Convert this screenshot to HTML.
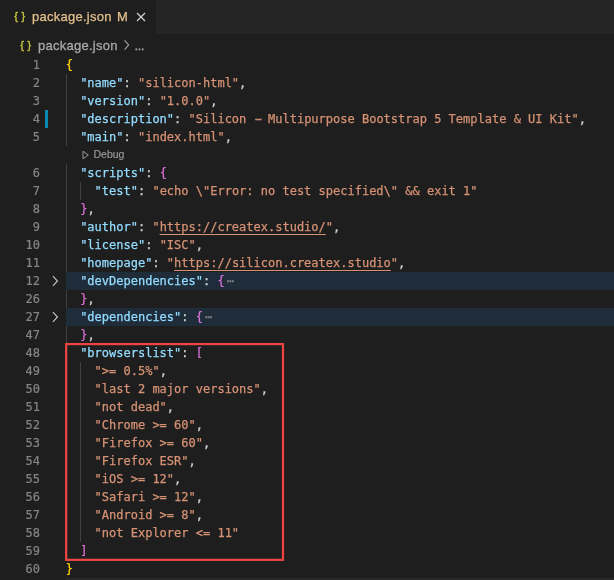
<!DOCTYPE html>
<html><head><meta charset="utf-8">
<style>
html,body{margin:0;padding:0;background:#1e1e1e;}
body{width:614px;height:580px;overflow:hidden;position:relative;font-family:"Liberation Sans",sans-serif;}
#tabbar{will-change:transform;position:absolute;left:0;top:0;width:614px;height:34px;background:#252526;}
#tab{position:absolute;left:0;top:0;width:156px;height:34px;background:#1e1e1e;}
.ico{position:absolute;font-family:"Liberation Sans",sans-serif;color:#cbcb41;font-size:11px;letter-spacing:3.7px;-webkit-text-stroke:0.35px #cbcb41;line-height:14px;}
#tab .ico{left:14.2px;top:9px;}
#tab .lbl{-webkit-text-stroke:0.25px #e2c08d;position:absolute;left:32px;top:9px;font-size:13px;letter-spacing:0.25px;color:#e2c08d;white-space:pre;}
#tab .m{-webkit-text-stroke:0.25px #e2c08d;position:absolute;left:117px;top:9px;font-size:13px;color:#e2c08d;}
#tab svg{position:absolute;left:135px;top:11px;}
#bc{will-change:transform;position:absolute;left:0;top:35px;width:614px;height:22px;}
#bc .ico{left:20.2px;top:3px;}
#bc .lbl{-webkit-text-stroke:0.3px #a9a9a9;position:absolute;left:38px;top:3px;font-size:13px;letter-spacing:0.25px;color:#a9a9a9;white-space:pre;}
.bcc{position:absolute;left:122.8px;top:3.5px;}
.el{position:absolute;left:134.4px;top:6px;font-size:10px;color:#a9a9a9;-webkit-text-stroke:0.7px #a9a9a9;}
#code{will-change:transform;position:absolute;left:0;top:56px;width:614px;font-family:"DejaVu Sans Mono","Liberation Mono",monospace;font-size:12px;letter-spacing:0;line-height:18px;color:#d4d4d4;}
.l{position:relative;height:18px;white-space:pre;}
.n{-webkit-text-stroke:0.2px #858585;position:absolute;left:0;top:0px;width:40px;text-align:right;color:#858585;}
.c{position:absolute;left:65.7px;top:0px;-webkit-text-stroke:0.25px;}
.k{color:#94dcff}.s{color:#d69275}.y{color:#ffd700}.p{color:#da70d6}.u{text-decoration:underline;text-decoration-thickness:1px;text-underline-offset:3px;text-decoration-skip-ink:none}
.d{display:inline-block;transform:scaleX(.8);transform-origin:100% 50%;-webkit-text-stroke:0.5px #d69275;}
.fold{position:absolute;left:66px;top:0;width:548px;height:18px;background:#1f2d3b;}
.g{position:absolute;top:0;width:1px;height:18px;background:#404040;}
.cl{-webkit-text-stroke:0.2px #999;font-family:"Liberation Sans",sans-serif;font-size:10.5px;color:#999;position:absolute;left:93.5px;top:-1px;letter-spacing:0;}
.tri{position:absolute;left:81.5px;top:4px;}
#red{position:absolute;left:0;top:0;}
#strip{position:absolute;left:66px;top:578px;width:548px;height:2px;background:#282828;}
#mod{position:absolute;left:45px;top:110px;width:3px;height:18px;background:#0c8bb0;}
.chev{position:absolute;left:51px;top:3px;}
</style></head><body>
<div id="tabbar"><div id="tab"><span class="ico">{}</span><span class="lbl">package.json</span><span class="m">M</span>
<svg width="12" height="12" viewBox="0 0 12 12"><path d="M2 2 L10 10 M10 2 L2 10" stroke="#d4d4d4" stroke-width="1.15" fill="none"/></svg></div></div>
<div id="bc"><span class="ico">{}</span><span class="lbl">package.json</span><svg class="bcc" width="8" height="12" viewBox="0 0 8 12"><path d="M1.6 1.4 L5.6 6 L1.6 10.6" fill="none" stroke="#a9a9a9" stroke-width="1.1"/></svg><span class="el">…</span></div>
<div id="mod"></div>
<div id="code">
<div class="l"><span class="n">1</span><span class="c"><span class="y">{</span></span></div>
<div class="l"><span class="n">2</span><i class="g" style="left:66px"></i><span class="c">  <span class="k">"name"</span>: <span class="s">"silicon-html"</span>,</span></div>
<div class="l"><span class="n">3</span><i class="g" style="left:66px"></i><span class="c">  <span class="k">"version"</span>: <span class="s">"1.0.0"</span>,</span></div>
<div class="l"><span class="n">4</span><i class="g" style="left:66px"></i><span class="c">  <span class="k">"description"</span>: <span class="s">"Silicon <span class="d">–</span> Multipurpose Bootstrap 5 Template &amp; UI Kit"</span>,</span></div>
<div class="l"><span class="n">5</span><i class="g" style="left:66px"></i><span class="c">  <span class="k">"main"</span>: <span class="s">"index.html"</span>,</span></div>
<div class="l"><svg class="tri" width="8" height="10" viewBox="0 0 8 10"><path d="M1 1.2 L6.3 5 L1 8.8 Z" fill="none" stroke="#999" stroke-width="1"/></svg><span class="cl">Debug</span></div>
<div class="l"><span class="n">6</span><i class="g" style="left:66px"></i><span class="c">  <span class="k">"scripts"</span>: <span class="p">{</span></span></div>
<div class="l"><span class="n">7</span><i class="g" style="left:66px"></i><i class="g" style="left:80px"></i><span class="c">    <span class="k">"test"</span>: <span class="s">"echo \"Error: no test specified\" &amp;&amp; exit 1"</span></span></div>
<div class="l"><span class="n">8</span><i class="g" style="left:66px"></i><span class="c">  <span class="p">}</span>,</span></div>
<div class="l"><span class="n">9</span><i class="g" style="left:66px"></i><span class="c">  <span class="k">"author"</span>: <span class="s">"<span class="u">https://createx.studio/</span>"</span>,</span></div>
<div class="l"><span class="n">10</span><i class="g" style="left:66px"></i><span class="c">  <span class="k">"license"</span>: <span class="s">"ISC"</span>,</span></div>
<div class="l"><span class="n">11</span><i class="g" style="left:66px"></i><span class="c">  <span class="k">"homepage"</span>: <span class="s">"<span class="u">https://silicon.createx.studio</span>"</span>,</span></div>
<div class="l"><span class="n">12</span><svg class="chev" width="8" height="12" viewBox="0 0 8 12"><path d="M1.9 1.2 L6.5 6 L1.9 10.8" fill="none" stroke="#c5c5c5" stroke-width="1.1"/></svg><div class="fold"></div><span class="c">  <span class="k">"devDependencies"</span>: <span class="p">{</span><span style="color:#808080;margin-left:2px">⋯</span></span></div>
<div class="l"><span class="n">26</span><i class="g" style="left:66px"></i><span class="c">  <span class="p">}</span>,</span></div>
<div class="l"><span class="n">27</span><svg class="chev" width="8" height="12" viewBox="0 0 8 12"><path d="M1.9 1.2 L6.5 6 L1.9 10.8" fill="none" stroke="#c5c5c5" stroke-width="1.1"/></svg><div class="fold"></div><span class="c">  <span class="k">"dependencies"</span>: <span class="p">{</span><span style="color:#808080;margin-left:2px">⋯</span></span></div>
<div class="l"><span class="n">47</span><i class="g" style="left:66px"></i><span class="c">  <span class="p">}</span>,</span></div>
<div class="l"><span class="n">48</span><i class="g" style="left:66px"></i><span class="c">  <span class="k">"browserslist"</span>: <span class="p">[</span></span></div>
<div class="l"><span class="n">49</span><i class="g" style="left:66px"></i><i class="g" style="left:80px"></i><span class="c">    <span class="s">"&gt;= 0.5%"</span>,</span></div>
<div class="l"><span class="n">50</span><i class="g" style="left:66px"></i><i class="g" style="left:80px"></i><span class="c">    <span class="s">"last 2 major versions"</span>,</span></div>
<div class="l"><span class="n">51</span><i class="g" style="left:66px"></i><i class="g" style="left:80px"></i><span class="c">    <span class="s">"not dead"</span>,</span></div>
<div class="l"><span class="n">52</span><i class="g" style="left:66px"></i><i class="g" style="left:80px"></i><span class="c">    <span class="s">"Chrome &gt;= 60"</span>,</span></div>
<div class="l"><span class="n">53</span><i class="g" style="left:66px"></i><i class="g" style="left:80px"></i><span class="c">    <span class="s">"Firefox &gt;= 60"</span>,</span></div>
<div class="l"><span class="n">54</span><i class="g" style="left:66px"></i><i class="g" style="left:80px"></i><span class="c">    <span class="s">"Firefox ESR"</span>,</span></div>
<div class="l"><span class="n">55</span><i class="g" style="left:66px"></i><i class="g" style="left:80px"></i><span class="c">    <span class="s">"iOS &gt;= 12"</span>,</span></div>
<div class="l"><span class="n">56</span><i class="g" style="left:66px"></i><i class="g" style="left:80px"></i><span class="c">    <span class="s">"Safari &gt;= 12"</span>,</span></div>
<div class="l"><span class="n">57</span><i class="g" style="left:66px"></i><i class="g" style="left:80px"></i><span class="c">    <span class="s">"Android &gt;= 8"</span>,</span></div>
<div class="l"><span class="n">58</span><i class="g" style="left:66px"></i><i class="g" style="left:80px"></i><span class="c">    <span class="s">"not Explorer &lt;= 11"</span></span></div>
<div class="l"><span class="n">59</span><i class="g" style="left:66px"></i><span class="c">  <span class="p">]</span></span></div>
<div class="l"><span class="n">60</span><span class="c"><span class="y">}</span></span></div>
</div>
<svg id="red" width="614" height="580" viewBox="0 0 614 580"><rect x="66.15" y="344.1" width="216.85" height="215.75" fill="none" stroke="#f04444" stroke-width="2.2"/></svg>
<div id="strip"></div>
</body></html>
